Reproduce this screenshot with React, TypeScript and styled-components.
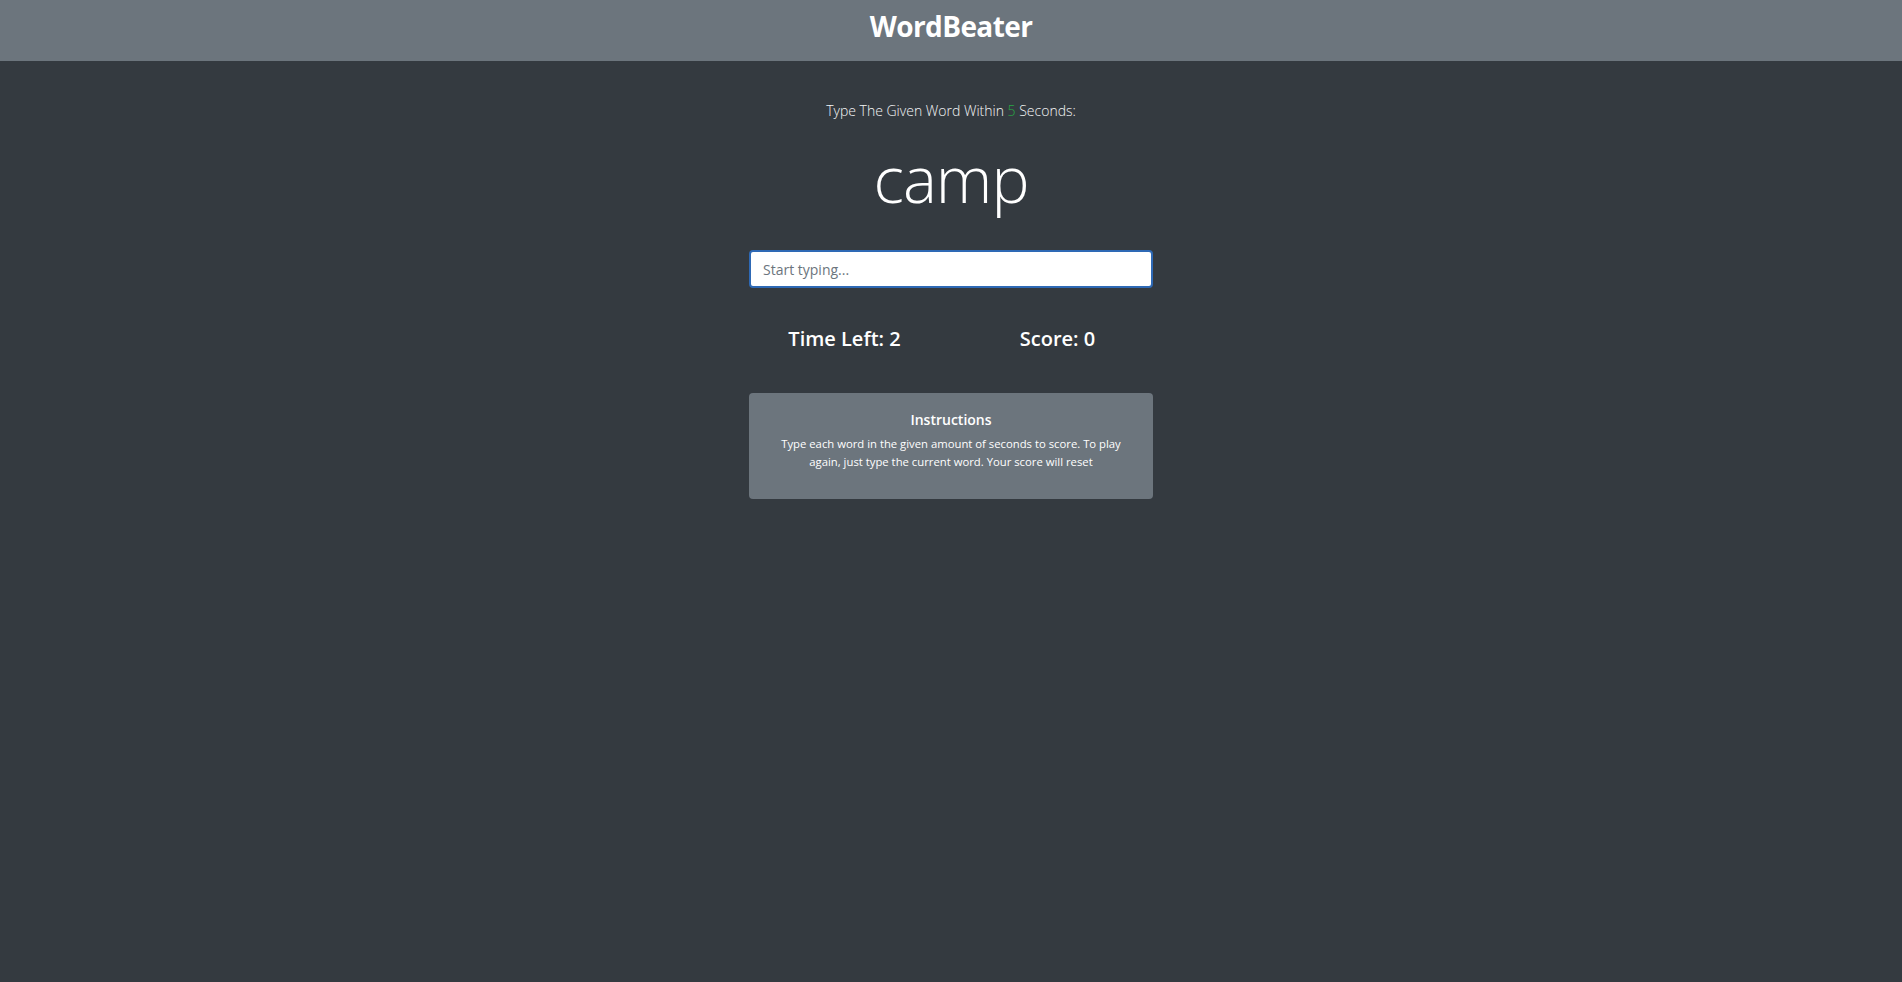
import React, { useState } from "react";
import styled, { createGlobalStyle } from "styled-components";

const GlobalStyle = createGlobalStyle`
  html, body {
    margin: 0;
    padding: 0;
    background: #343a40;
    font-family: "Open Sans", "Noto Sans", sans-serif;
    color: #ffffff;
  }
  * { box-sizing: border-box; }
`;

const Page = styled.div`
  min-height: 982px;
  background: #343a40;
`;

const Header = styled.header`
  height: 61px;
  background: #6c757d;
  display: flex;
  justify-content: center;
  align-items: flex-start;
  padding-top: 6px;
`;

const Title = styled.h1`
  margin: 0;
  font-size: 28px;
  line-height: 40px;
  font-weight: 700;
  color: #ffffff;
  letter-spacing: -0.6px;
`;

const Main = styled.main`
  width: 404px;
  margin: 0 auto;
  display: flex;
  flex-direction: column;
  align-items: stretch;
  padding-top: 39px;
`;

const Lead = styled.p`
  margin: 0;
  text-align: center;
  font-size: 14px;
  line-height: 22px;
  font-weight: 300;
  color: #f5f6f7;
`;

const Seconds = styled.span`
  color: #28a745;
`;

const Word = styled.h2`
  margin: 15px 0 0;
  text-align: center;
  font-size: 64px;
  line-height: 84px;
  font-weight: 300;
  color: #ffffff;
  letter-spacing: -1px;
`;

const Input = styled.input`
  margin-top: 29px;
  width: 100%;
  height: 38px;
  border: 2px solid #2e69b5;
  border-radius: 4px;
  background: #ffffff;
  padding: 0 12px;
  font-family: "Open Sans", "Noto Sans", sans-serif;
  font-size: 14px;
  color: #495057;
  outline: none;
  &::placeholder {
    color: #6c757d;
  }
`;

const Stats = styled.div`
  margin: 36px -11px 0;
  display: grid;
  grid-template-columns: 1fr 1fr;
`;

const Stat = styled.h3`
  margin: 0;
  text-align: center;
  font-size: 20px;
  line-height: 30px;
  font-weight: 600;
  color: #ffffff;
`;

const Card = styled.section`
  margin-top: 39px;
  background: #6c757d;
  border-radius: 4px;
  padding: 16px 20px 28px;
  text-align: center;
`;

const CardTitle = styled.h5`
  margin: 0;
  font-size: 14px;
  line-height: 22px;
  font-weight: 600;
  color: #ffffff;
`;

const CardText = styled.p`
  margin: 4px 0 0;
  font-size: 11.3px;
  line-height: 18px;
  color: #ffffff;
`;

export default function App() {
  const [value, setValue] = useState("");
  return (
    <Page>
      <GlobalStyle />
      <Header>
        <Title>WordBeater</Title>
      </Header>
      <Main>
        <Lead>
          Type The Given Word Within <Seconds>5</Seconds> Seconds:
        </Lead>
        <Word>camp</Word>
        <Input
          placeholder="Start typing..."
          value={value}
          onChange={(e) => setValue(e.target.value)}
        />
        <Stats>
          <Stat>Time Left: 2</Stat>
          <Stat>Score: 0</Stat>
        </Stats>
        <Card>
          <CardTitle>Instructions</CardTitle>
          <CardText>
            Type each word in the given amount of seconds to score. To play
            again, just type the current word. Your score will reset
          </CardText>
        </Card>
      </Main>
    </Page>
  );
}
